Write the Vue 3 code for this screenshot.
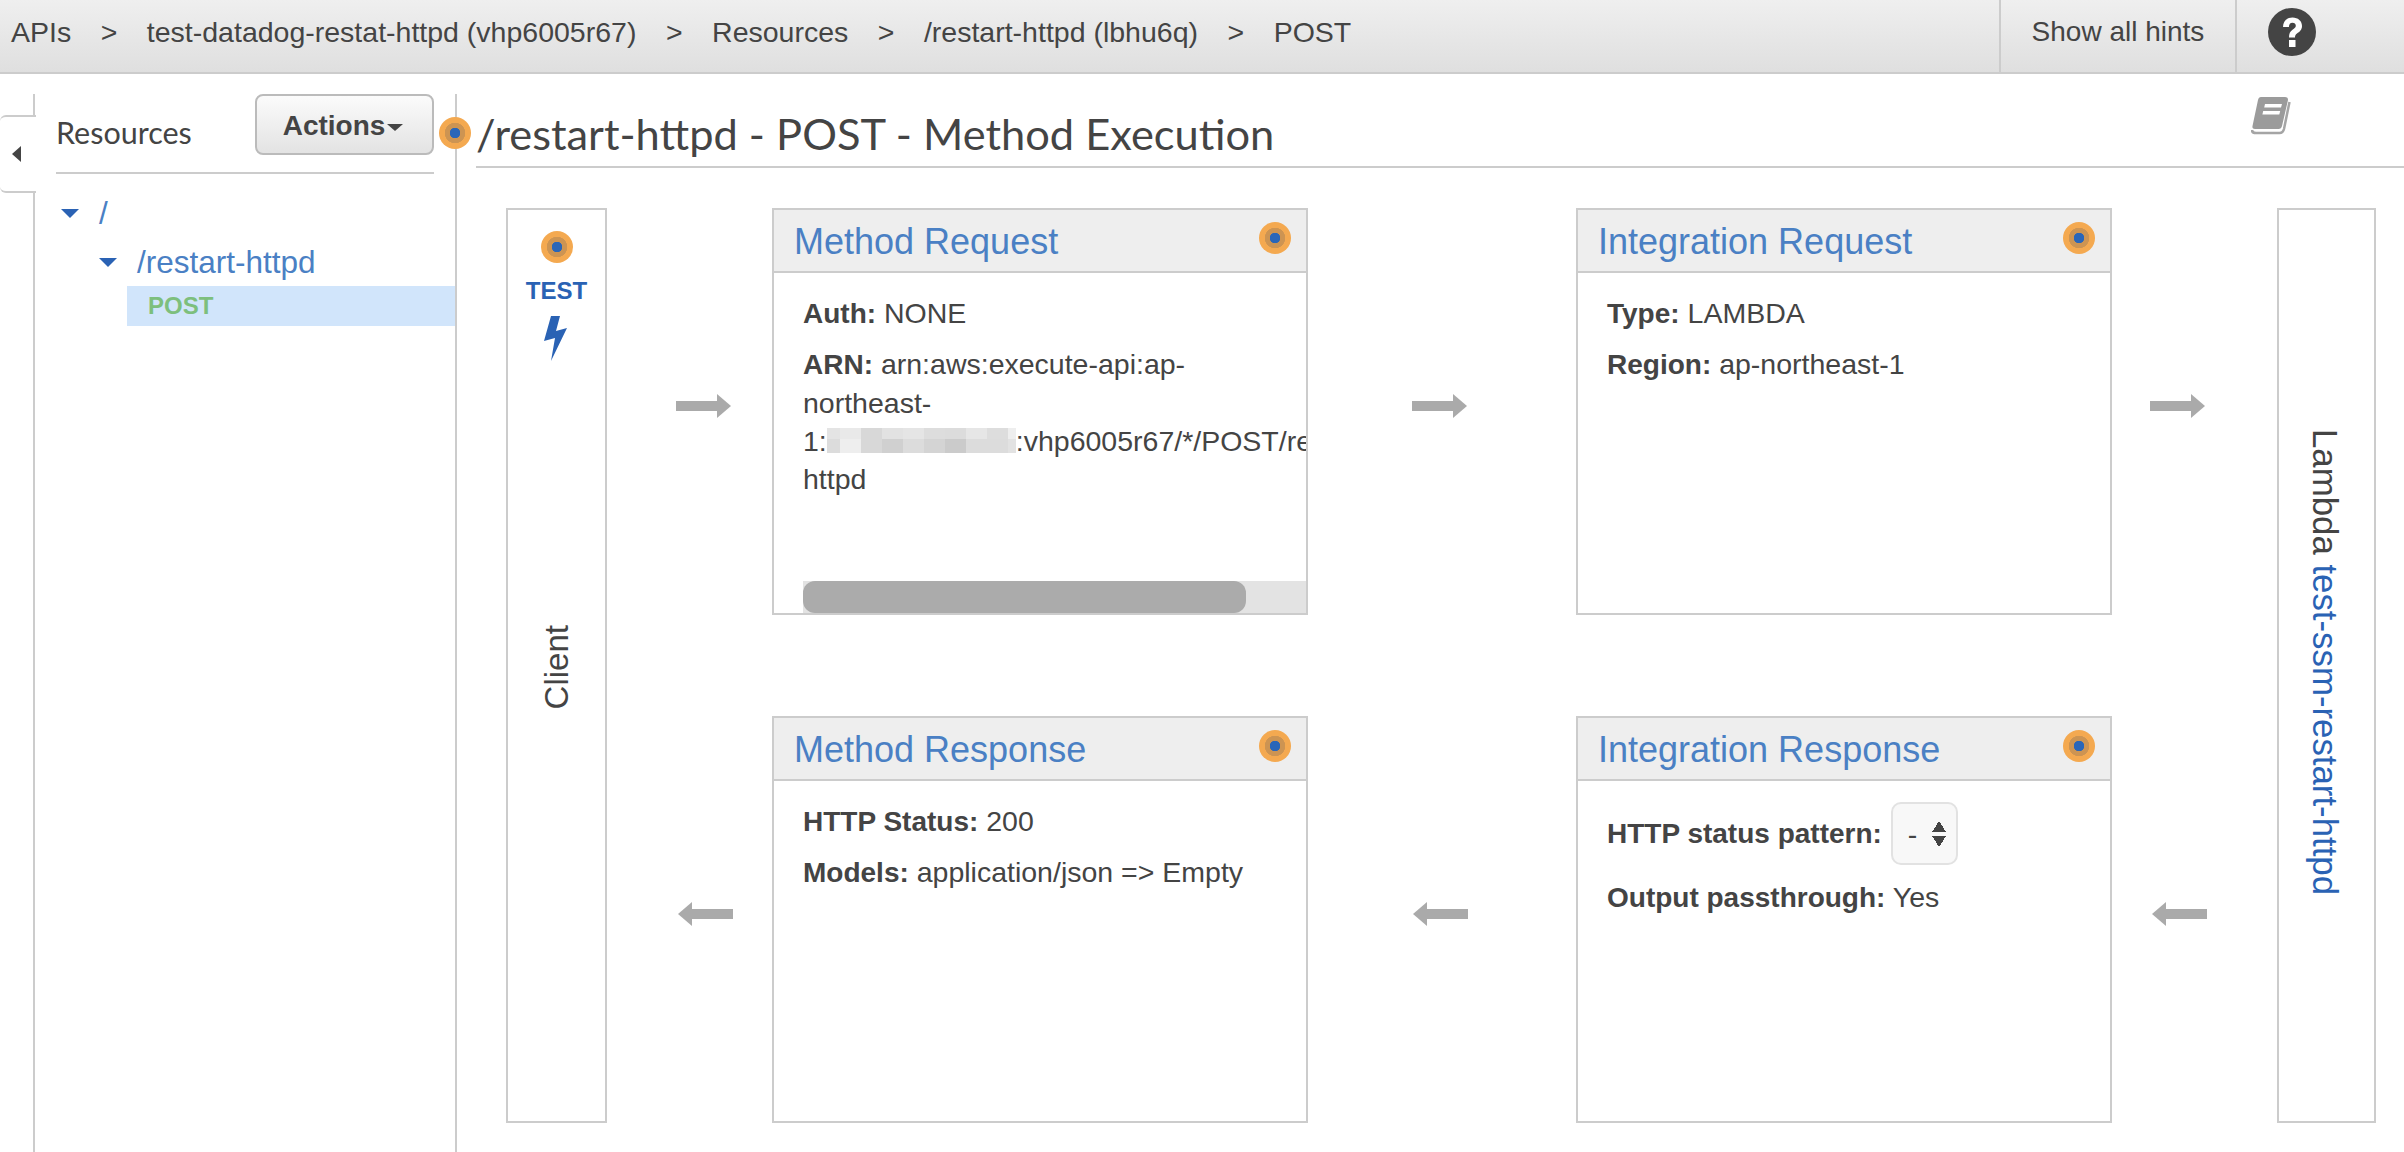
<template>
  <div class="page">
    <!-- top breadcrumb bar -->
    <header class="topbar">
      <nav class="crumbs">
        <template v-for="(crumb, index) in crumbs" :key="crumb">
          <span v-if="index > 0" class="crumb-sep">&gt;</span>
          <span>{{ crumb }}</span>
        </template>
      </nav>
      <div class="hints-btn">Show all hints</div>
      <div class="help-btn">
        <svg width="48" height="48" viewBox="0 0 48 48">
          <circle cx="24" cy="24" r="24" fill="#444" />
          <path d="M15 19c0-6 4-9.500 9.500-9.500S34 13 34 18c0 4-2.500 5.800-5 7.500-1.500 1-2 2-2 4h-6c0-4 1-6 3.500-7.800 2-1.400 3.300-2.300 3.300-4 0-1.800-1.300-3-3.300-3-2.300 0-3.500 1.500-3.600 4.300z" fill="#fff" />
          <rect x="21" y="32" width="6.500" height="7" fill="#fff" />
        </svg>
      </div>
    </header>

    <main class="main">
      <!-- collapsed rail with tab -->
      <div class="rail">
        <div class="rail-tab">
          <span class="rail-arrow"></span>
        </div>
      </div>

      <!-- resources tree -->
      <aside class="sidebar">
        <div class="sidebar-head">
          <span class="sidebar-title">Resources</span>
          <button class="actions-btn">Actions<span class="caret"></span></button>
        </div>
        <ul class="tree">
          <li class="tree-row"><span class="tree-toggle"></span><a>/</a></li>
          <li class="tree-row nested"><span class="tree-toggle"></span><a>/restart-httpd</a></li>
          <li class="tree-method">POST</li>
        </ul>
      </aside>

      <section class="content">
        <span class="hint title-hint"></span>
        <div class="title-row">
          <h1>/restart-httpd - POST - Method Execution</h1>
          <svg class="book" width="41" height="38" viewBox="0 0 41 38">
            <path d="M10 0h24c2 0 3 1 3 3l-6 26c-.5 2-1.500 3-3.500 3H4c-2 0-3-1-2.500-3L7 3c.4-2 1.500-3 3-3z" fill="#9b9b9b" />
            <path d="M38.500 5 33 32c-.6 2.500-2.200 4-4.500 4H5c-2.500 0-4-1-4-3" fill="none" stroke="#a5a5a5" stroke-width="2.500" />
            <path d="M14 7h17l-1 3.500H13.200zM12.200 14h17l-.9 3.500H11.400z" fill="#fff" />
          </svg>
        </div>

        <div class="flow">
          <!-- client column -->
          <div class="side-box client">
            <span class="hint"></span>
            <span class="test-label">TEST</span>
            <svg class="bolt" width="24" height="45" viewBox="0 0 24 45">
              <path d="M7 0h9l-4 15 11-3L7 45l4-23-11 3z" fill="#2a62b4" />
            </svg>
            <span class="client-label">Client</span>
          </div>

          <span class="arrow right a1"></span>

          <article class="card">
            <div class="card-head">
              <a>Method Request</a>
              <span class="hint"></span>
            </div>
            <div class="card-body scroll-body">
              <div class="scroll-text">
                <p><b>Auth:</b> NONE</p>
                <p>
                  <b>ARN:</b> arn:aws:execute-api:ap-northeast-<span class="nowrap">1:<span class="redacted"><span class="redacted-grid"><i v-for="(shade, i) in redaction" :key="i" :style="{ background: shade }"></i></span></span>:vhp6005r67/*/POST/restart-</span>httpd
                </p>
              </div>
              <div class="scrollbar"><div class="scroll-thumb"></div></div>
            </div>
          </article>

          <span class="arrow right a2"></span>

          <article class="card">
            <div class="card-head">
              <a>Integration Request</a>
              <span class="hint"></span>
            </div>
            <div class="card-body">
              <p><b>Type:</b> LAMBDA</p>
              <p><b>Region:</b> ap-northeast-1</p>
            </div>
          </article>

          <span class="arrow right a3"></span>

          <div class="side-box lambda">
            <span class="lambda-label">Lambda <a>test-ssm-restart-httpd</a></span>
          </div>

          <span class="arrow left b1"></span>

          <article class="card">
            <div class="card-head">
              <a>Method Response</a>
              <span class="hint"></span>
            </div>
            <div class="card-body">
              <p><b>HTTP Status:</b> 200</p>
              <p><b>Models:</b> application/json =&gt; Empty</p>
            </div>
          </article>

          <span class="arrow left b2"></span>

          <article class="card">
            <div class="card-head">
              <a>Integration Response</a>
              <span class="hint"></span>
            </div>
            <div class="card-body">
              <div class="pattern-row">
                <b>HTTP status pattern:</b>
                <div class="fake-select">
                  <span>-</span>
                  <span class="updown"></span>
                </div>
              </div>
              <p><b>Output passthrough:</b> Yes</p>
            </div>
          </article>

          <span class="arrow left b3"></span>
        </div>
      </section>
    </main>
  </div>
</template>

<script setup>
const crumbs = [
  'APIs',
  'test-datadog-restat-httpd (vhp6005r67)',
  'Resources',
  '/restart-httpd (lbhu6q)',
  'POST',
];

// blurred account id, two rows of pixel blocks
const redaction = [
  '#e4e4e4', '#e9e9e9', '#d8d8d8', '#e2e2e2', '#e5e5e5', '#dddddd', '#dcdcdc', '#e6e6e6', '#dddddd', '#eeeeee',
  '#dcdcdc', '#eeeeee', '#d8d8d8', '#d0d0d0', '#dcdcdc', '#d4d4d4', '#cbcbcb', '#dcdcdc', '#dcdcdc', '#e2e2e2',
];
</script>

<style>
html,
body {
  margin: 0;
  background: #fff;
}
</style>

<style scoped>
.page {
  height: 1152px;
  overflow: hidden;
  display: flex;
  flex-direction: column;
  font-family: "Liberation Sans", Arial, sans-serif;
  font-size: 28.500px;
  color: #444;
}

b {
  font-size: 28px;
}

.topbar {
  height: 72px;
  flex: none;
  display: flex;
  align-items: stretch;
  background: linear-gradient(#efefef, #dfdfdf);
  border-bottom: 2px solid #ccc;
}

.crumbs {
  flex: 1;
  display: flex;
  align-items: center;
  padding-left: 11px;
  padding-bottom: 8px;
  white-space: nowrap;
}

.crumb-sep {
  margin: 0 29.500px;
}

.hints-btn {
  width: 234px;
  display: flex;
  align-items: center;
  justify-content: center;
  padding-bottom: 8px;
  font-size: 28px;
  border-left: 2px solid #ccc;
  border-right: 2px solid #ccc;
}

.help-btn {
  width: 167px;
  padding: 8px 0 0 31px;
  box-sizing: border-box;
}

.main {
  flex: 1;
  min-height: 0;
  display: flex;
  padding-top: 20px;
}

.rail {
  width: 35px;
  flex: none;
  box-sizing: border-box;
  border-right: 2px solid #ccc;
  padding-top: 21px;
}

.rail-tab {
  width: 36px;
  height: 78px;
  box-sizing: border-box;
  background: #fff;
  border: 2px solid #ccc;
  border-left: 0;
  border-right: 0;
  border-radius: 6px 0 0 6px;
  display: flex;
  align-items: center;
  padding-left: 12px;
}

.rail-arrow {
  border-style: solid;
  border-width: 8px 9px 8px 0;
  border-color: transparent #444 transparent transparent;
}

.sidebar {
  width: 422px;
  flex: none;
  box-sizing: border-box;
  padding-left: 21px;
  border-right: 2px solid #ccc;
}

.sidebar-head {
  width: 378px;
  height: 80px;
  box-sizing: border-box;
  display: flex;
  justify-content: space-between;
  align-items: flex-start;
  border-bottom: 2px solid #ccc;
}

.sidebar-title {
  font-family: Lato, sans-serif;
  font-size: 30.500px;
  line-height: 38px;
  margin-top: 19px;
}

.actions-btn {
  width: 179px;
  height: 61px;
  padding: 2px 3px 0 0;
  box-sizing: border-box;
  font: bold 28px "Liberation Sans", Arial, sans-serif;
  color: #444;
  background: linear-gradient(#fbfbfb, #e3e3e3);
  border: 2px solid #bbb;
  border-radius: 8px;
}

.caret {
  display: inline-block;
  margin-left: 2px;
  vertical-align: middle;
  border-style: solid;
  border-width: 7px 8px 0;
  border-color: #444 transparent transparent;
}

.tree {
  list-style: none;
  margin: 22px 0 0;
  padding: 0;
  font-size: 31.500px;
}

.tree-row {
  height: 49px;
  display: flex;
  align-items: flex-start;
  padding-left: 5px;
  line-height: 34px;
  color: #4a80c4;
}

.tree-row.nested {
  height: 41px;
  padding-left: 43px;
}

.tree-toggle {
  margin: 13px 20px 0 0;
  border-style: solid;
  border-width: 9px 9px 0;
  border-color: #2a62b4 transparent transparent;
}

.tree-method {
  margin: 0 0 0 71px;
  height: 40px;
  line-height: 40px;
  padding-left: 21px;
  background: #d1e5fb;
  font-size: 24px;
  font-weight: bold;
  color: #7dbf7d;
}

.content {
  flex: 1;
  min-width: 0;
  position: relative;
}

.hint {
  display: block;
  flex: none;
  width: 32px;
  height: 32px;
  border-radius: 50%;
  background: radial-gradient(circle, #2a66b8 0 5px, #cd9452 5.500px 10px, #f4a950 10.500px);
}

/* sits over the sidebar divider */
.title-hint {
  position: absolute;
  left: -18px;
  top: 23px;
}

.title-row {
  height: 72px;
  margin-left: 19px;
  padding-right: 112px;
  display: flex;
  justify-content: space-between;
  align-items: flex-start;
  border-bottom: 2px solid #ccc;
}

h1 {
  margin: 0;
  padding-top: 13px;
  font-family: Lato, sans-serif;
  font-size: 43.400px;
  line-height: 52px;
  font-weight: 400;
}

.book {
  margin-top: 3px;
}

.flow {
  display: grid;
  grid-template-columns: 101px 165px 536px 268px 536px 165px 99px;
  grid-template-rows: 407px 407px;
  row-gap: 101px;
  margin: 40px 0 0 49px;
}

.side-box {
  grid-row: 1 / span 2;
  box-sizing: border-box;
  border: 2px solid #ccc;
  display: flex;
  flex-direction: column;
  align-items: center;
}

.client {
  padding-top: 21px;
}

.test-label {
  margin-top: 16px;
  font-size: 24px;
  line-height: 24px;
  font-weight: bold;
  color: #2a62b4;
}

.bolt {
  margin: 13px 0 0 -2px;
}

.client-label {
  margin-top: 264px;
  font-size: 33px;
  line-height: 38px;
  writing-mode: vertical-rl;
  transform: rotate(180deg);
}

.lambda {
  grid-column: 7;
}

.lambda-label {
  margin: 219px 3px 0 0;
  font-size: 34.800px;
  line-height: 42px;
  writing-mode: vertical-rl;
}

.lambda a {
  color: #2a62b4;
}

.card {
  box-sizing: border-box;
  border: 2px solid #ccc;
  display: flex;
  flex-direction: column;
  min-width: 0;
}

.card-head {
  height: 63px;
  flex: none;
  box-sizing: border-box;
  background: #eee;
  border-bottom: 2px solid #ccc;
  display: flex;
  justify-content: space-between;
  padding: 12px 15px 0 20px;
  font-size: 36px;
  line-height: 42px;
  color: #4a80c4;
}

.card-head a {
  margin-top: -1px;
}

.card-body {
  flex: 1;
  min-height: 0;
  padding: 21px 0 0 29px;
  line-height: 38px;
}

.card-body p {
  margin: 0 0 12px;
}

.scroll-body {
  display: flex;
  flex-direction: column;
  padding-left: 0;
  overflow: hidden;
}

.scroll-text {
  flex: 1;
  min-height: 0;
  width: 480px;
  padding-left: 29px;
}

.nowrap {
  white-space: nowrap;
}

/* clipped box so the block does not stretch the line */
.redacted {
  display: inline-block;
  width: 189px;
  height: 25px;
  margin-top: -20px;
  overflow: hidden;
  vertical-align: -2px;
}

.redacted-grid {
  display: grid;
  grid-template-columns: 13px repeat(8, 21px) 8px;
  grid-template-rows: 11px 14px;
}

.scrollbar {
  margin-left: 29px;
  height: 32px;
  flex: none;
  background: #e3e3e3;
}

.scroll-thumb {
  width: 443px;
  height: 32px;
  background: #ababab;
  border-radius: 12px;
}

.pattern-row {
  display: flex;
  align-items: center;
  gap: 9px;
  margin: 0 0 13px;
}

.fake-select {
  width: 67px;
  height: 63px;
  box-sizing: border-box;
  display: flex;
  align-items: center;
  justify-content: space-between;
  padding: 0 10px 0 15px;
  background: #f8f8f8;
  border: 2px solid #e2e2e2;
  border-radius: 10px;
}

.updown {
  width: 14px;
  height: 26px;
  background:
    linear-gradient(to bottom right, transparent 50%, #444 50%) 0 0 / 7px 11px no-repeat,
    linear-gradient(to bottom left, transparent 50%, #444 50%) 7px 0 / 7px 11px no-repeat,
    linear-gradient(to top right, transparent 50%, #444 50%) 0 15px / 7px 11px no-repeat,
    linear-gradient(to top left, transparent 50%, #444 50%) 7px 15px / 7px 11px no-repeat;
}

.arrow {
  position: relative;
  display: block;
  width: 55px;
  height: 24px;
  margin-top: 186px;
}

.arrow::before {
  content: "";
  position: absolute;
  top: 7px;
  width: 42px;
  height: 10px;
  background: #aaa;
}

.arrow::after {
  content: "";
  position: absolute;
  top: 0;
  border-style: solid;
  border-width: 12px 0;
  border-color: transparent;
}

.arrow.right::before {
  left: 0;
}

.arrow.right::after {
  right: 0;
  border-left: 14px solid #aaa;
}

.arrow.left::before {
  right: 0;
}

.arrow.left::after {
  left: 0;
  border-right: 14px solid #aaa;
}

.a1 { margin-left: 69px; }
.a2 { margin-left: 104px; }
.a3 { margin-left: 38px; }
.b1 { grid-row: 2; grid-column: 2; margin-left: 71px; }
.b2 { margin-left: 105px; }
.b3 { margin-left: 40px; }
</style>
